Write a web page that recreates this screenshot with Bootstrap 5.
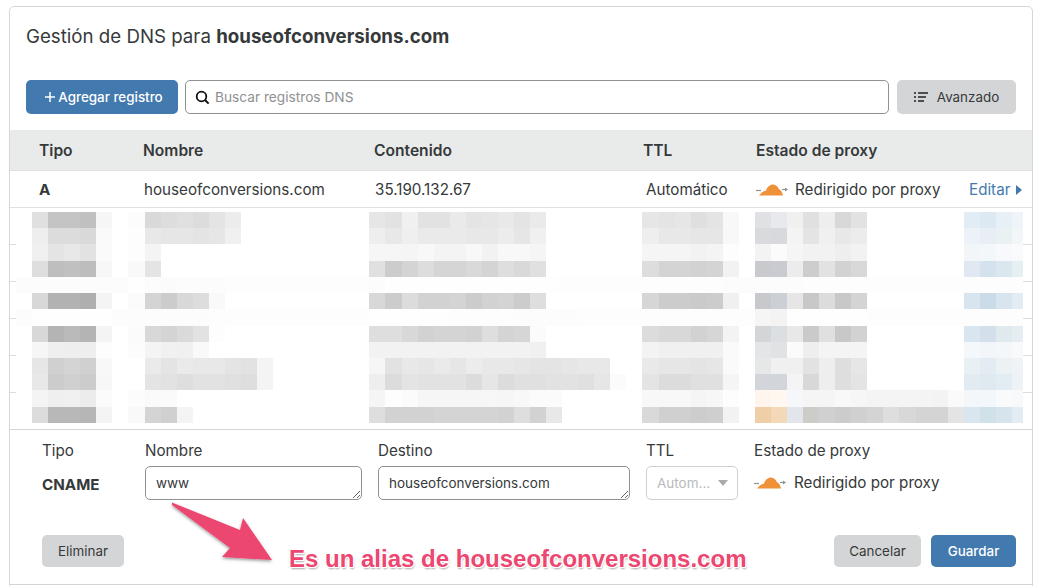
<!DOCTYPE html>
<html lang="es">
<head>
  <meta charset="UTF-8" />
  <title>Gestión de DNS</title>
  <link href="https://cdn.jsdelivr.net/npm/bootstrap@5.3.0/dist/css/bootstrap.min.css" rel="stylesheet"/>
  <style>
    html, body { height: 586px; overflow: hidden; }
    body { background: #fff; font-family: Inter, "Liberation Sans", sans-serif; font-size: 15.2px; color: #36393a; position: relative; }
    .dns-panel { margin: 6px 12px 0 9px; border-color: #d5d6d6; border-radius: 5px 5px 0 0; height: 590px; }
    .dns-title { font-size: 18.7px; font-weight: 400; margin: 0; padding: 19px 16px 0; line-height: 22px; height: 73px; color: #36393a; }
    .dns-title b { font-weight: 700; }
    .dns-tools { padding: 0 16px; height: 50px; }
    .dns-btn { height: 34px; font-size: 13.4px; border-radius: 5px; border: 0; padding: 0; font-weight: 500; display: inline-flex; align-items: center; justify-content: center; }
    .dns-btn-blue { background: #4279ae; color: #fff; }
    .dns-btn-blue:hover { background: #4279ae; color: #fff; }
    .dns-btn-grey { background: #d4d5d7; color: #36393a; font-weight: 400; }
    .dns-btn-grey:hover { background: #d4d5d7; color: #36393a; }
    .btn-add { width: 152px; gap: 2px; padding-left: 3px; }
    .btn-adv { width: 119px; gap: 9px; }
    .search-box { width: 704px; height: 34px; margin: 0 8px 0 7px; border: 1px solid #8f9192; border-radius: 5px; padding: 0 9px; gap: 5px; }
    .search-box input { border: 0; outline: 0; padding: 0; width: 100%; font-size: 13.7px; color: #36393a; }
    .search-box input::placeholder { color: #8f9192; }
    .dns-grid { display: grid; grid-template-columns: 104px 231px 269px 113px 213px auto; padding-left: 29px; align-items: center; }
    .dns-head { height: 41px; padding-top: 2px; background: #e9ebeb; font-weight: 600; font-size: 15.6px; border-bottom: 1px solid #e0e1e1; }
    .dns-row-a { height: 37px; padding-top: 2px; border-bottom: 1px solid #dfe0e0; }
    .dns-row-a > span { padding-left: 1px; }
    .dns-row-a > span:first-child, .dns-row-a > span.proxy-cell { padding-left: 0; }
    .dns-row-a > span.ttl-cell { padding-left: 3px; }
    .proxy-cell { display: flex; align-items: center; gap: 7px; }
    .edit-link { color: #4279ae; text-decoration: none; white-space: nowrap; display: inline-flex; align-items: center; gap: 6px; }
    .blur-list { height: 222px; padding: 4px 0 0 6px; background: repeating-linear-gradient(to bottom, transparent 0, transparent 36px, #dcdddd 36px, #dcdddd 37px); border-bottom: 1px solid #d4d5d5; }
    .blur-line { display: flex; width: 1007px; height: 16.23px; background: #fff; overflow: hidden; }
    .blur-line i { display: block; flex: 0 0 16.07px; height: 100%; }
    .blur-gap { height: 3px; width: 1007px; background: #fff; }
    .edit-form { height: 155px; border-bottom: 1px solid #d4d5d5; padding: 11px 16px 0 32px; position: relative; }
    .edit-cols { display: grid; grid-template-columns: 103px 233px 268px 108px auto; }
    .edit-label { line-height: 20px; margin-bottom: 5px; }
    .edit-cname { font-weight: 700; line-height: 34px; padding-top: 2px; }
    .edit-input { display: block; height: 34px; min-height: 34px; font-size: 13.5px; line-height: 18px; padding: 7px 10px 5px; border: 1px solid #8f9192; border-radius: 5px; color: #36393a; }
    .input-name { width: 217px; }
    .input-dest { width: 252px; }
    .input-ttl { width: 92px; height: 34px; font-size: 13.5px; padding: 0 26px 0 10px; border-color: #cfd0d1; border-radius: 5px; color: #b9babb; background-color: #fff; background-size: 10px 6px; background-position: right 9px center; background-image: url("data:image/svg+xml,%3Csvg xmlns='http://www.w3.org/2000/svg' viewBox='0 0 10 6'%3E%3Cpath fill='%23a9aaab' d='M0 0h10L5 6z'/%3E%3C/svg%3E"); }
    .input-ttl:disabled { background-color: #fff; color: #b9babb; }
    .proxy-edit { height: 34px; gap: 8px; }
    .edit-actions { margin-top: 33px; }
    .act-gap { gap: 10px; }
    .btn-del { width: 82px; height: 32px; }
    .btn-cancel { width: 87px; height: 32px; }
    .btn-save { width: 85px; height: 32px; }
    .note-arrow { position: absolute; left: 165px; top: 495px; overflow: visible; }
    .note-text { position: absolute; left: 289px; top: 544px; font-family: "Liberation Sans", Arial, sans-serif; font-weight: 700; font-size: 24px; line-height: 30px; color: #ec4671; white-space: nowrap; text-shadow: 1px 0 #fff, -1px 0 #fff, 0 1px #fff, 0 -1px #fff, 1px 1px #fff, -1px -1px #fff, 1px -1px #fff, -1px 1px #fff, 1px 2px 2px rgba(0,0,0,.35); }
  </style>
</head>
<body>
  <div class="card dns-panel">
    <h1 class="dns-title">Gestión de DNS para <b>houseofconversions.com</b></h1>

    <div class="dns-tools d-flex align-items-start">
      <button class="btn dns-btn dns-btn-blue btn-add" type="button">
        <svg width="12" height="12" viewBox="0 0 12 12"><path d="M6 1v10M1 6h10" stroke="#fff" stroke-width="1.500"/></svg>Agregar registro
      </button>
      <div class="search-box d-flex align-items-center">
        <svg width="15" height="15" viewBox="0 0 15 15" class="flex-shrink-0"><circle cx="6.500" cy="6.500" r="4.800" fill="none" stroke="#111" stroke-width="1.800"/><path d="M10 10l3.600 3.600" stroke="#111" stroke-width="2"/></svg>
        <input type="text" placeholder="Buscar registros DNS" />
      </div>
      <button class="btn dns-btn dns-btn-grey btn-adv" type="button">
        <svg width="14" height="12" viewBox="0 0 14 12"><path d="M0 2h2M4 2h10M0 6h2M4 6h8M0 10h2M4 10h6" stroke="#222" stroke-width="1.600"/></svg>Avanzado
      </button>
    </div>

    <div class="dns-grid dns-head">
      <span>Tipo</span><span>Nombre</span><span>Contenido</span><span>TTL</span><span>Estado de proxy</span><span></span>
    </div>
    <div class="dns-grid dns-row-a">
      <span class="fw-bold">A</span>
      <span>houseofconversions.com</span>
      <span>35.190.132.67</span>
      <span class="ttl-cell">Automático</span>
      <span class="proxy-cell">
        <svg width="32" height="12" viewBox="0 0 32 12"><use href="#cf-cloud"/></svg>Redirigido por proxy
      </span>
      <a class="edit-link" href="#">Editar<svg width="6" height="10" viewBox="0 0 6 10"><path d="M0 0l6 5-6 5z" fill="#4279ae"/></svg></a>
    </div>

    <div class="blur-list" id="blurList"></div>

    <div class="edit-form">
      <div class="edit-cols">
        <div>
          <div class="edit-label">Tipo</div>
          <div class="edit-cname">CNAME</div>
        </div>
        <div>
          <div class="edit-label">Nombre</div>
          <textarea class="edit-input input-name" rows="1">www</textarea>
        </div>
        <div>
          <div class="edit-label">Destino</div>
          <textarea class="edit-input input-dest" rows="1">houseofconversions.com</textarea>
        </div>
        <div>
          <div class="edit-label">TTL</div>
          <select class="form-select input-ttl" disabled><option>Autom...</option></select>
        </div>
        <div>
          <div class="edit-label">Estado de proxy</div>
          <div class="proxy-cell proxy-edit">
            <svg width="32" height="12" viewBox="0 0 32 12"><use href="#cf-cloud"/></svg>Redirigido por proxy
          </div>
        </div>
      </div>
      <div class="edit-actions d-flex justify-content-between">
        <button class="btn dns-btn dns-btn-grey btn-del" type="button">Eliminar</button>
        <div class="d-flex act-gap">
          <button class="btn dns-btn dns-btn-grey btn-cancel" type="button">Cancelar</button>
          <button class="btn dns-btn dns-btn-blue btn-save" type="button">Guardar</button>
        </div>
      </div>
    </div>
  </div>

  <svg class="note-arrow" width="112" height="70" viewBox="165 495 112 70">
    <defs><filter id="arrowShadow" x="-10%" y="-10%" width="125%" height="125%"><feDropShadow dx="0" dy="1.500" stdDeviation="1.500" flood-color="#000" flood-opacity=".4"/></filter></defs>
    <path filter="url(#arrowShadow)" fill="#ec4671" d="M172 502.500L240 530L243 518L272 560L222 557L230 548L172 505z"/>
  </svg>
  <div class="note-text">Es un alias de houseofconversions.com</div>

  <svg width="0" height="0" class="d-block">
    <symbol id="cf-cloud" viewBox="0 0 32 12">
      <path d="M0 6.500h5" stroke="#8f9192" stroke-width="1.200"/>
      <path d="M26 5.500h3" stroke="#8f9192" stroke-width="1.200"/>
      <path d="M29 3.500l3 2-3 2z" fill="#8f9192"/>
      <path fill="#ee9138" d="M3 11.500C5 9 7 7 10 6.800C11 3 14 .6 17 .6C20 .6 22 3 23 5.200C25 5.800 26.500 8.500 27 11.500z"/>
    </symbol>
  </svg>

  <script>
    // mosaic of the redacted rows: col:values per segment, grey or rgb hex
    const rows = [
      '1:e0 c4 c4 c0 f6|7:fc|8:d9 dd e0 dc e4 ec|22:e6 e2 f0 e2 e2 ea e4 e6 e9 e4 ea|39:e6 e4 e6 df e4 f8|46:dfe1e5 e8e9ec f0f0ee e0 ee d8 e2|59:e2ecf4 dde9f2 e8f0f7 eef4f8',
      '1:ee dc dc d9 fa|7:fd|8:e8 e6 e6 e4 e6 f0|22:ee e8 ef ea ea ea e8 e8 ec e6 f0|39:ee e8 e8 e6 e6 f8|46:d9dadd d8d9dc f4 e4 f0 e8 ec|59:ecf2f7 e8eef5 e9f1f3 f2f6f9',
      '1:f0 e4 e8 e2 fa|7:fd|8:f4|22:f6 f6 f5 f8 f4 f4 f8 f2 f8 f8 f5|39:f5 f5 f5 f2 f4 fd|46:f3 fb f5 f2 f2 ee f2|59:f2f6f9 f2f7f9 f8f9fc f9fafc',
      '1:de be c0 bd f7|7:f9|8:e4|22:e0 cc d4 dd d5 d5 d9 d4 de d9 e0|39:dd d4 d4 d2 d4 f2|46:c9cace cacbd0 ec cd e2 d2 d8|59:e0e8f1 d3e2ec dae7ef e6f0f3',
      '0:fc fc fc fc fc fc fc fe fc fb fc fc fc fd fd fd fd fd fd fd fd fd fc fe fe fe fe fe fe fe fe fe fe fe fd fd fd fd fd fd fd fd fd fd fc fc fc fc fc fd fd fd fd fd fd fd fd fd fd fd fd fd fd',
      '1:d8 b2 b2 af f4|7:fb|8:d4 cc d8 dd f9|22:d8 cc dc d2 d2 d4 cc d2 d4 cc de|39:d6 cc cc ca cc f0|46:c8c9cd cbd0d6 e6 c8 dc c8 d4|59:d8e5ee cbdce9 d9e5ee e3ecf3',
      '0:fc fe fe fe fe fe fc fc fc fc fc fc fd fd fd fd fd fd fd fd fd fd fe fe fe fe fe fd fd fd fd fc fc fc fc fd fd fd fd fd fd fd fd fd fd fd|46:f5 f3 fe fe fe fe fe fd fd fd fd fd fd|59:fd fd fd fd',
      '1:d8 b4 ba b4 f4|7:fb|8:d8 d4 da e2 fd|22:de de d8 d2 d4 d4 d2 de d4 d6 fb|39:dc d8 d8 d2 d6 f3|46:d4d5d8 dcdfe2 e8 ca e0 c8 d2|59:d9e6ef d3e0ec dfe9ee e5edf3',
      '1:f6 ef ee ee fd|7:fc|8:f4 f1 f0 f9|22:f2 f2 f2 f2 f2 f2 f2 f2 f2 f2 f0|39:f3 f0 f0 f0 f0 fa|46:e4e5e7 e0e2e4 fb ee f4 f4 f4|59:f5f8fb f2f6fa f3f7fa f8f9fb',
      '1:e6 d0 d4 d0 f8|8:ea e4 ea e8 e8 e4 e2 f4|22:f6 e2 e8 e6 ea e6 ec e8 e8 e6 e4 e4 e6 e8 e8|39:e9 e6 e6 e4 e6 fa|46:e6e8e8 f0 f0 e2 ee de e6|59:e8f0f3 e4ecf3 ecf2f4 eff3f8',
      '1:e8 cc d0 cc f7|8:e4 e2 de e2 e2 e0 de f4|22:ee dc e4 e2 e2 e2 dc e6 dc e0 e0 e2 e2 e0 e6 fb|39:e4 dc dc e0 e0 f5|46:d2d5da d2d5da f4 d8 ee de e4|59:e2ebf2 dfe9f0 e4ecf3 edf2f6',
      '1:f4 ef f0 ec fb|7:fc|8:fa fa|22:f5 fd fb f6 f6 f6 f6 f7 f6 f8 fb fb|39:f8 f8 f8 f5 f7 fd|46:fff5ec fff8f0 f5f7fa f5 f5 f8 f6 f4 f4 f4 f4 f3 fa|59:f3f7fa f2f7fb f8fafc f7f9fb',
      '1:dc b8 b8 b6 f4|7:f9|8:d4 d0 f4|22:de d2 d2 d2 d4 d4 d4 d4 d2 de d2 e8|39:d9 d0 d0 cd cf f2|46:efcfa8 f4d9b8 e2e6ea ccccc8 d0 cc d0 d4 de d8 d4 d4 e4|59:d9e6ef d0e1ea d6e4ed e4ecf3'
    ];
    const list = document.getElementById('blurList');
    rows.forEach((r) => {
      const line = document.createElement('div');
      line.className = 'blur-line';
      const cells = new Array(63).fill('');
      r.split('|').forEach((seg) => {
        const [start, vals] = seg.split(':');
        vals.split(' ').forEach((v, i) => {
          cells[+start + i] = v.length === 2 ? '#' + v + v + v : '#' + v;
        });
      });
      cells.forEach((c) => {
        const cell = document.createElement('i');
        if (c) cell.style.background = c;
        line.appendChild(cell);
      });
      list.appendChild(line);
    });
    const gap = document.createElement('div');
    gap.className = 'blur-gap';
    list.appendChild(gap);
  </script>
  <script src="https://cdn.jsdelivr.net/npm/bootstrap@5.3.0/dist/js/bootstrap.bundle.min.js"></script>
</body>
</html>
